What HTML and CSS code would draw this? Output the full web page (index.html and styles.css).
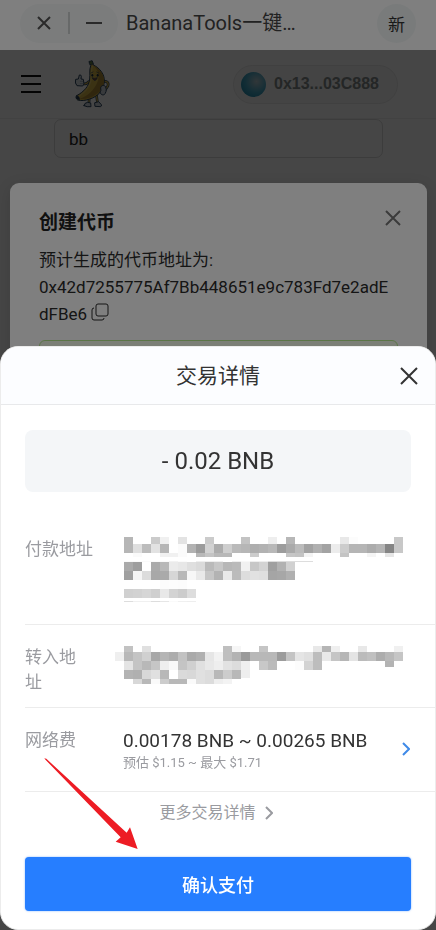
FILE: index.html
```html
<!DOCTYPE html>
<html lang="zh-CN">
<head>
<meta charset="utf-8">
<meta name="viewport" content="width=device-width, initial-scale=1">
<title>BananaTools</title>
<link rel="stylesheet" href="styles.css">
</head>
<body>
<div class="app">
  <header class="topbar">
    <div class="window-pill">
      <button class="icon-button" type="button" aria-label="关闭"><svg width="16" height="16" viewBox="0 0 16 16"><path d="M2 2l12 12M14 2L2 14"/></svg></button>
      <span class="pill-rule"></span>
      <button class="icon-button" type="button" aria-label="最小化"><svg width="18" height="16" viewBox="0 0 18 16"><path d="M1 8h16"/></svg></button>
    </div>
    <h1 class="topbar-title">BananaTools一键…</h1>
    <button class="new-button" type="button">新</button>
  </header>

  <main class="page">
    <nav class="site-nav">
      <button class="menu-button" type="button" aria-label="菜单"><svg width="20" height="20" viewBox="0 0 20 20"><path d="M0 2h20M0 10h20M0 18h20"/></svg></button>
      <svg class="logo" viewBox="222 182 111 150" role="img" aria-label="Banana">
        <g stroke="#2d4660" stroke-width="3" stroke-linejoin="round" stroke-linecap="round">
          <path d="M268 291l-1 21M289 287l3 23" fill="none" stroke-width="8"/>
          <path d="M268 291l-1 21M289 287l3 23" fill="none" stroke="#d4b24a" stroke-width="4"/>
          <path d="M252 322q1-9 11-10l9 2 1 11q-12 2-21-3z" fill="#cdd5dc"/>
          <path d="M285 313l11-3 8 9q2 5-3 6l-15-1z" fill="#cdd5dc"/>
          <path d="M309 252c8-7 18 0 15 10l-7 11" fill="none" stroke-width="8"/>
          <path d="M309 252c8-7 18 0 15 10l-7 11" fill="none" stroke="#d4b24a" stroke-width="4"/>
          <path d="M266 250c-5 6-10 8-15 6" fill="none" stroke-width="8"/>
          <path d="M266 250c-5 6-10 8-15 6" fill="none" stroke="#d4b24a" stroke-width="4"/>
          <path d="M269 190l8-2 3 12c20 9 34 29 33 48-1 28-20 47-44 54-14 5-25 6-36 3-5-3-6-9-3-13 22-12 37-28 39-50 2-16-2-26 3-40z" fill="#d9b748"/>
          <path d="M282 202c13 15 18 31 10 50-10 24-28 41-54 50 32 3 69-16 74-50 2-20-10-39-30-50z" fill="#b08c34" stroke="none"/>
          <path d="M277 204c-5 17-1 32-5 46-5 18-18 32-34 43" fill="none" stroke="#e6cc68" stroke-width="4"/>
          <path d="M268 189l8-2 4 10-10 2z" fill="#5f7d48" stroke-width="2"/>
          <path d="M230 292q9 1 9 12-8 0-10-4-2-4 1-8z" fill="#25394b" stroke-width="2"/>
          <path d="M228 243l7-1 3-12q5-2 6 4l-1 8 7 1 2 14-4 6-17-1-4-7z" fill="#dbe2e8" stroke-width="3"/>
          <path d="M241 249h7M241 256h7" fill="none" stroke-width="1"/>
          <path d="M302 268c0-7 12-10 15-2 4 9 1 19-6 24-9 0-13-8-9-13z" fill="#cdd5dc" stroke-width="3"/>
          <path d="M273 224l6-3M290 221l6 3M277 239q8 16 15-1-7 4-15 1z" fill="#83453b" stroke-width="2"/>
          <ellipse cx="277" cy="231" rx="3" ry="4" fill="#1b3042" stroke="none"/>
          <ellipse cx="293" cy="231" rx="3" ry="4" fill="#1b3042" stroke="none"/>
        </g>
      </svg>
      <button class="wallet" type="button"><span class="orb"></span>0x13...03C888</button>
    </nav>
    <input class="symbol-input" type="text" value="bb" aria-label="代币符号">
  </main>
  <div class="page-mask"></div>

  <section class="token-dialog" aria-labelledby="token-title">
    <div class="dialog-head">
      <h2 id="token-title">创建代币</h2>
      <button class="icon-button dialog-close" type="button" aria-label="关闭"><svg width="16" height="16" viewBox="0 0 16 16"><path d="M1 1l14 14M15 1L1 15"/></svg></button>
    </div>
    <p class="token-address">预计生成的代币地址为:<br>0x42d7255775Af7Bb448651e9c783Fd7e2adEdFBe6
      <button class="icon-button copy" type="button" aria-label="复制"><svg width="18" height="18" viewBox="0 0 18 18"><rect x="5" y="1" width="12" height="12" rx="2"/><path d="M3 5Q1 5 1 7V15q0 2 2 2h8q2 0 2-2"/></svg></button>
    </p>
    <div class="notice"></div>
  </section>
</div>

<div class="backdrop"></div>
<section class="sheet" aria-labelledby="sheet-title">
  <header class="sheet-head">
    <h2 id="sheet-title">交易详情</h2>
    <button class="icon-button sheet-close" type="button" aria-label="关闭"><svg width="18" height="18" viewBox="0 0 18 18"><path d="M1 1l16 16M17 1L1 17"/></svg></button>
  </header>
  <div class="amount">- 0.02 BNB</div>
  <dl class="details">
    <div class="row row-from">
      <dt>付款地址</dt>
      <dd><svg class="mosaic" id="payer" width="288" height="70" viewBox="-9 1 288 70" role="img" aria-label="已隐藏"></svg></dd>
    </div>
    <div class="row">
      <dt class="narrow">转入地址</dt>
      <dd><svg class="mosaic" id="payee" width="288" height="40" viewBox="-9 -1 288 40" role="img" aria-label="已隐藏"></svg></dd>
    </div>
    <div class="row row-fee">
      <dt>网络费</dt>
      <dd class="fee">
        <div>
          <div class="fee-main">0.00178 BNB ~ 0.00265 BNB</div>
          <div class="fee-sub">预估 $1.15 ~ 最大 $1.71</div>
        </div>
        <button class="icon-button fee-edit" type="button" aria-label="修改网络费"><svg width="8" height="14" viewBox="0 0 8 14"><path d="M1 1l6 6-6 6"/></svg></button>
      </dd>
    </div>
  </dl>
  <a class="more" href="#">更多交易详情 <svg width="8" height="14" viewBox="0 0 8 14"><path d="M1 1l6 6-6 6"/></svg></a>
  <div class="actions">
    <button class="confirm" type="button">确认支付</button>
    <svg class="pointer" width="96" height="92" viewBox="132 174 288 276" aria-hidden="true"><path d="M133 175l6 1L380 398l10-16 23 65-66-22 15-13L135 178z"/></svg>
  </div>
</section>
<script src="script.js"></script>
</body>
</html>
```
FILE: styles.css
```css
* { box-sizing: border-box; }
body {
  margin: 0;
  min-height: 100vh;
  background: #fff;
  color: #333;
  font-family: Roboto, "Noto Sans CJK SC", sans-serif;
}
h1, h2, p, dl, dd { margin: 0; }
button { border: 0; padding: 0; background: none; font: inherit; color: inherit; }
svg { display: block; fill: none; stroke: currentColor; stroke-width: 2; }
.icon-button { display: grid; place-items: center; }

.app { position: relative; min-height: 100vh; display: flex; flex-direction: column; }
.topbar {
  display: flex;
  align-items: center;
  gap: 8px;
  height: 50px;
  padding: 0 20px 4px;
  background: #fff;
}
.window-pill {
  display: flex;
  align-items: center;
  justify-content: space-between;
  width: 98px;
  height: 39px;
  padding: 0 15px 0 16px;
  border-radius: 20px;
  background: #f6f9f9;
}
.window-pill .icon-button { color: #555; }
.pill-rule { width: 2px; height: 22px; background: #cfd2d2; }
.topbar-title { flex: 1; color: #444; font-size: 20px; font-weight: 400; line-height: 28px; }
.new-button { width: 39px; height: 39px; border-radius: 50%; background: #f3f7f7; font-size: 17px; }

.page { flex: 1; background: #fff; }
.site-nav {
  display: flex;
  align-items: center;
  height: 69px;
  padding: 0 38px 0 21px;
  border-bottom: 1px solid #f0f0f0;
}
.menu-button { color: #111; }
.logo { width: 37px; height: 50px; margin-left: 33px; }
.wallet {
  display: flex;
  align-items: center;
  gap: 8px;
  height: 39px;
  margin-left: auto;
  padding: 0 18px 0 7px;
  border: 1px solid #ebebeb;
  border-radius: 20px;
  background: #f9f9f9;
  color: #848c8c;
  font-family: "Liberation Sans", sans-serif;
  font-size: 16px;
  font-weight: 700;
}
.orb {
  width: 25px;
  height: 25px;
  border-radius: 50%;
  background: radial-gradient(circle at 62% 38%, #b4c8cf, #44a6c4 50%, #0b7ca0);
}
.symbol-input {
  display: block;
  width: calc(100% - 107px);
  height: 39px;
  margin: 0 53px 0 54px;
  padding: 0 14px;
  border: 1px solid #dcdcdc;
  border-radius: 7px;
  background: #fff;
  color: #222;
  font: 17px Roboto, sans-serif;
}
.page-mask { position: absolute; inset: 50px 0 0; background: rgba(0, 0, 0, .45); }

.token-dialog {
  position: absolute;
  top: 183px;
  left: 10px;
  right: 9px;
  bottom: 24px;
  padding: 25px 29px 24px;
  border-radius: 9px;
  background: #fff;
  box-shadow: 0 4px 16px rgba(0, 0, 0, .12);
}
.dialog-head { display: flex; justify-content: space-between; color: #222; }
.dialog-head h2 { font-size: 19px; line-height: 30px; }
.dialog-close { width: 16px; height: 20px; margin-right: -3px; color: #777; }
.token-address {
  margin-top: 9px;
  padding-right: 4px;
  color: #2b2b2b;
  font-size: 17px;
  line-height: 27px;
  word-break: break-all;
}
.copy { display: inline-grid; vertical-align: -1px; }
.copy svg { stroke-width: 1; }
.notice { height: 48px; margin-top: 12px; border: 1px solid #b7eb8f; border-radius: 6px; background: #f6ffed; }

.backdrop { position: fixed; inset: 0; background: rgba(0, 0, 0, .5); }
.sheet {
  position: fixed;
  left: 0;
  right: 0;
  bottom: 0;
  border: 1px solid #ececec;
  border-radius: 18px;
  background: #fff;
  overflow: hidden;
}
.sheet-head {
  display: grid;
  grid-template-columns: 18px 1fr 18px;
  align-items: center;
  height: 58px;
  padding: 0 17px;
  border-bottom: 1px solid #e8e9eb;
  background: #fcfdff;
}
.sheet-head h2 { grid-column: 2; font-size: 21px; font-weight: 400; line-height: 30px; text-align: center; }
.amount {
  margin: 25px 24px 21px;
  border-radius: 8px;
  background: #f4f6f8;
  font-size: 24px;
  line-height: 62px;
  text-align: center;
}
.row {
  display: grid;
  grid-template-columns: 98px 1fr;
  min-height: 83px;
  margin-left: 24px;
  padding-top: 20px;
  border-bottom: 1px solid #ececec;
}
.row-from { min-height: 112px; padding-top: 24px; }
.row-fee { min-height: 84px; }
dt { color: #9a9ba0; font-size: 17px; line-height: 25px; }
.narrow { width: 60px; }
.mosaic { margin-left: -8px; stroke: none; }
.fee { display: flex; justify-content: space-between; padding-right: 25px; }
.fee-main { font-size: 19px; line-height: 26px; }
.fee-sub { color: #9a9ba0; font-size: 13px; line-height: 18px; }
.fee-edit { height: 42px; color: #3f8ae8; }
.fee-edit svg, .more svg { stroke-width: 2; }
.more {
  display: flex;
  align-items: center;
  justify-content: center;
  gap: 9px;
  padding-right: 4px;
  color: #9a9ba0;
  font-size: 16px;
  line-height: 42px;
  text-decoration: none;
}
.actions { position: relative; padding: 23px 24px 18px; }
.confirm {
  display: block;
  width: 100%;
  height: 54px;
  border-radius: 4px;
  background: #267eff;
  box-shadow: 0 0 2px rgba(38, 126, 255, .6);
  color: #fff;
  font-size: 18px;
  font-weight: 500;
}
.pointer { position: absolute; left: 43px; top: -76px; fill: #ed1c24; stroke: none; }
```
FILE: script.js
```js
// Each band: top, height, first column, then one grey level per 9px cell ("--" leaves a gap).
const payer = [
  [0, 8, 0, "b6 -- -- cb f0 -- e3 -- -- cb -- -- -- c3 -- -- ee -- b7 -- -- -- -- -- e8 fc -- -- -- -- c8"],
  [8, 9, 0, "b6 df bc e2 b6 -- fb b2 9b d2 ac ce ba b6 ae b2 b8 9c aa bb a2 b0 a3 ec cc b5 b5 ac b4 85 c8"],
  [17, 4, 0, "-- fa -- -- f1 f1 fb -- b8 c4 b8 b8 -- -- cc -- -- -- c6 c3 f4 -- -- -- c4 -- -- f5 -- e6 --"],
  [25, 1, 0, "fa fa fa fa fa f2 fa -- ee ee ee -- ee f8 ee ee dd dd dd dd dd"],
  [26, 9, 0, "aa 9e -- aa b8 eb e7 df da ba c7 b7 ba f1 c7 d3 a0 b2 d1"],
  [35, 9, 0, "a0 f5 dc a8 aa d6 b8 f7 e9 c6 b3 e9 bb dd e1 df a5 a7 b0"],
  [44, 9, 0, "-- -- -- -- fc fd fc"],
  [53, 9, 0, "d0 d2 d6 cf e8 d3 cc dd"],
  [65, 1, 0, "dd f0 f0 dd e6 fa f0 ee"]
];
const payee = [
  [0, 6, 0, "c2 -- e0 -- -- -- -- -- -- -- -- bf f6 -- -- c5 -- -- -- -- -- e8 b5 ef -- -- e8 -- -- -- f0"],
  [6, 9, -1, "ef b8 c4 d0 a8 b5 ad c2 aa b0 e6 f2 bf b3 9a b8 b8 b8 9c c4 e5 e0 bd e9 c5 b6 e4 bb c0 ad b8 c5"],
  [15, 9, 0, "e4 c4 b8 c6 ee f8 c4 d0 e0 e8 ee e2 dc f0 -- c8 bb -- -- fc d3 bd"],
  [15, 6, 29, "b3"],
  [24, 9, 0, "b3 b0 d8 e0 b8 -- da d8 e0 dc b8 cc b8"],
  [24, 8, 13, "ee"],
  [33, 5, 0, "-- d8 b8 fa cc b8 b8 fa e0 dc ee f3"]
];

function paint(id, bands) {
  const svg = document.getElementById(id);
  for (const [y, height, first, cells] of bands) {
    cells.split(" ").forEach((level, i) => {
      if (level === "--") return;
      const rect = document.createElementNS("http://www.w3.org/2000/svg", "rect");
      rect.setAttribute("x", (first + i) * 9);
      rect.setAttribute("y", y);
      rect.setAttribute("width", 9);
      rect.setAttribute("height", height);
      rect.setAttribute("fill", "#" + level.repeat(3));
      svg.appendChild(rect);
    });
  }
}
paint("payer", payer);
paint("payee", payee);
```
